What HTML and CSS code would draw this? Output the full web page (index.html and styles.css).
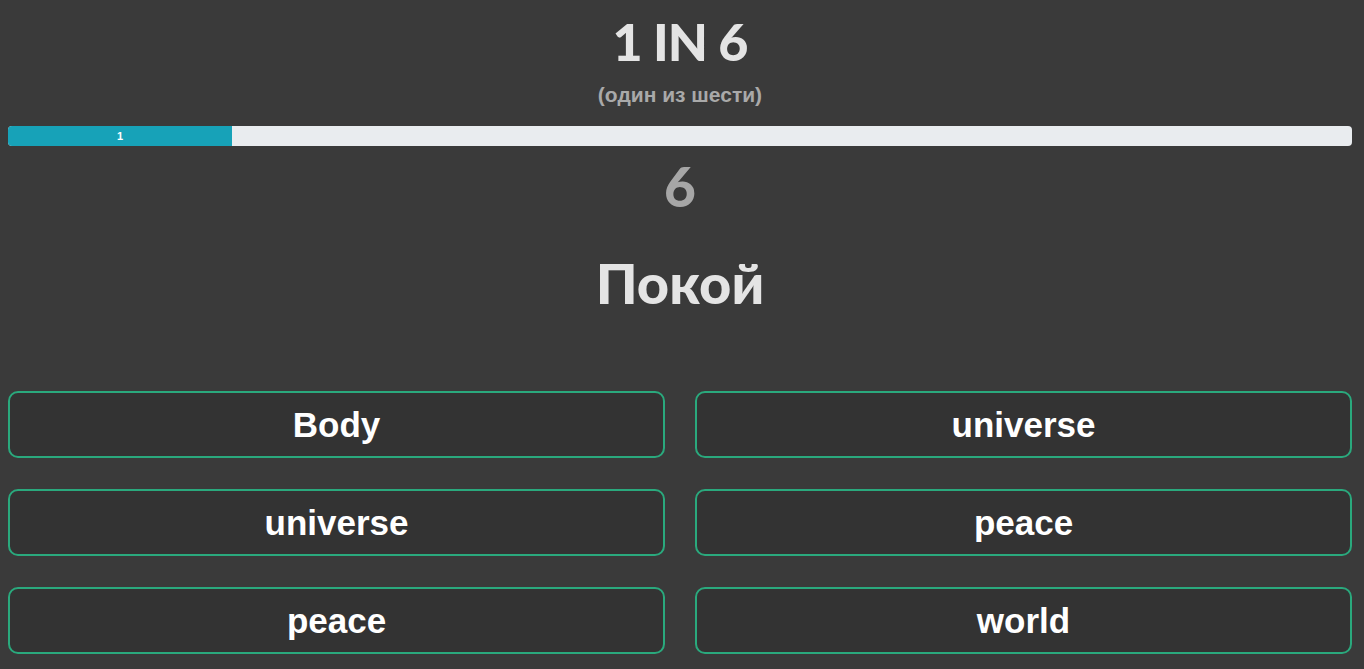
FILE: index.html
```html
<!DOCTYPE html>
<html lang="ru">
<head>
<meta charset="utf-8">
<title>1 in 6</title>
<link rel="stylesheet" href="styles.css">
</head>
<body>
<header class="head">
  <h1 class="title">1 IN 6</h1>
  <p class="subtitle">(один из шести)</p>
</header>
<div class="progress">
  <div class="progress-bar" style="width: 16.67%">1</div>
</div>
<div class="count">6</div>
<h2 class="word">Покой</h2>
<div class="answers">
  <button class="answer">Body</button>
  <button class="answer">universe</button>
  <button class="answer">universe</button>
  <button class="answer">peace</button>
  <button class="answer">peace</button>
  <button class="answer">world</button>
</div>
</body>
</html>
```

FILE: styles.css
```css
html, body {
  background: #3a3a3a;
}
body {
  margin: 8px 12px 8px 8px;
  font-family: "Liberation Sans", Arial, sans-serif;
  color: #e6e6e6;
}
.head {
  text-align: center;
}
.title {
  margin: 0;
  padding-top: 5px;
  font-family: Lato, "Liberation Sans", sans-serif;
  font-weight: 900;
  font-size: 52px;
  line-height: 56px;
  letter-spacing: -1px;
  color: #e4e4e4;
}
.subtitle {
  margin: 14px 0 0;
  font-size: 21px;
  line-height: 24px;
  font-weight: bold;
  color: #a9a9a9;
}
.progress {
  margin-top: 19px;
  height: 20px;
  background: #e9ecef;
  border-radius: 4px;
  overflow: hidden;
  display: flex;
}
.progress-bar {
  background: #17a2b8;
  color: #fff;
  font-size: 11px;
  font-weight: bold;
  display: flex;
  align-items: center;
  justify-content: center;
}
.count {
  margin-top: 10px;
  text-align: center;
  font-family: Lato, "Liberation Sans", sans-serif;
  font-weight: 900;
  font-size: 55px;
  line-height: 60px;
  color: #a6a6a6;
}
.word {
  margin: 37px 0 0;
  text-align: center;
  font-family: Lato, "Liberation Sans", sans-serif;
  font-weight: 900;
  font-size: 56px;
  line-height: 60px;
  color: #e4e4e4;
}
.answers {
  margin-top: 78px;
  display: grid;
  grid-template-columns: 1fr 1fr;
  column-gap: 30px;
  row-gap: 31px;
}
.answer {
  height: 67px;
  background: #333333;
  border: 2px solid #2aa97d;
  border-radius: 10px;
  color: #ffffff;
  font-family: "Liberation Sans", Arial, sans-serif;
  font-weight: bold;
  font-size: 35px;
  padding: 0;
}
```
